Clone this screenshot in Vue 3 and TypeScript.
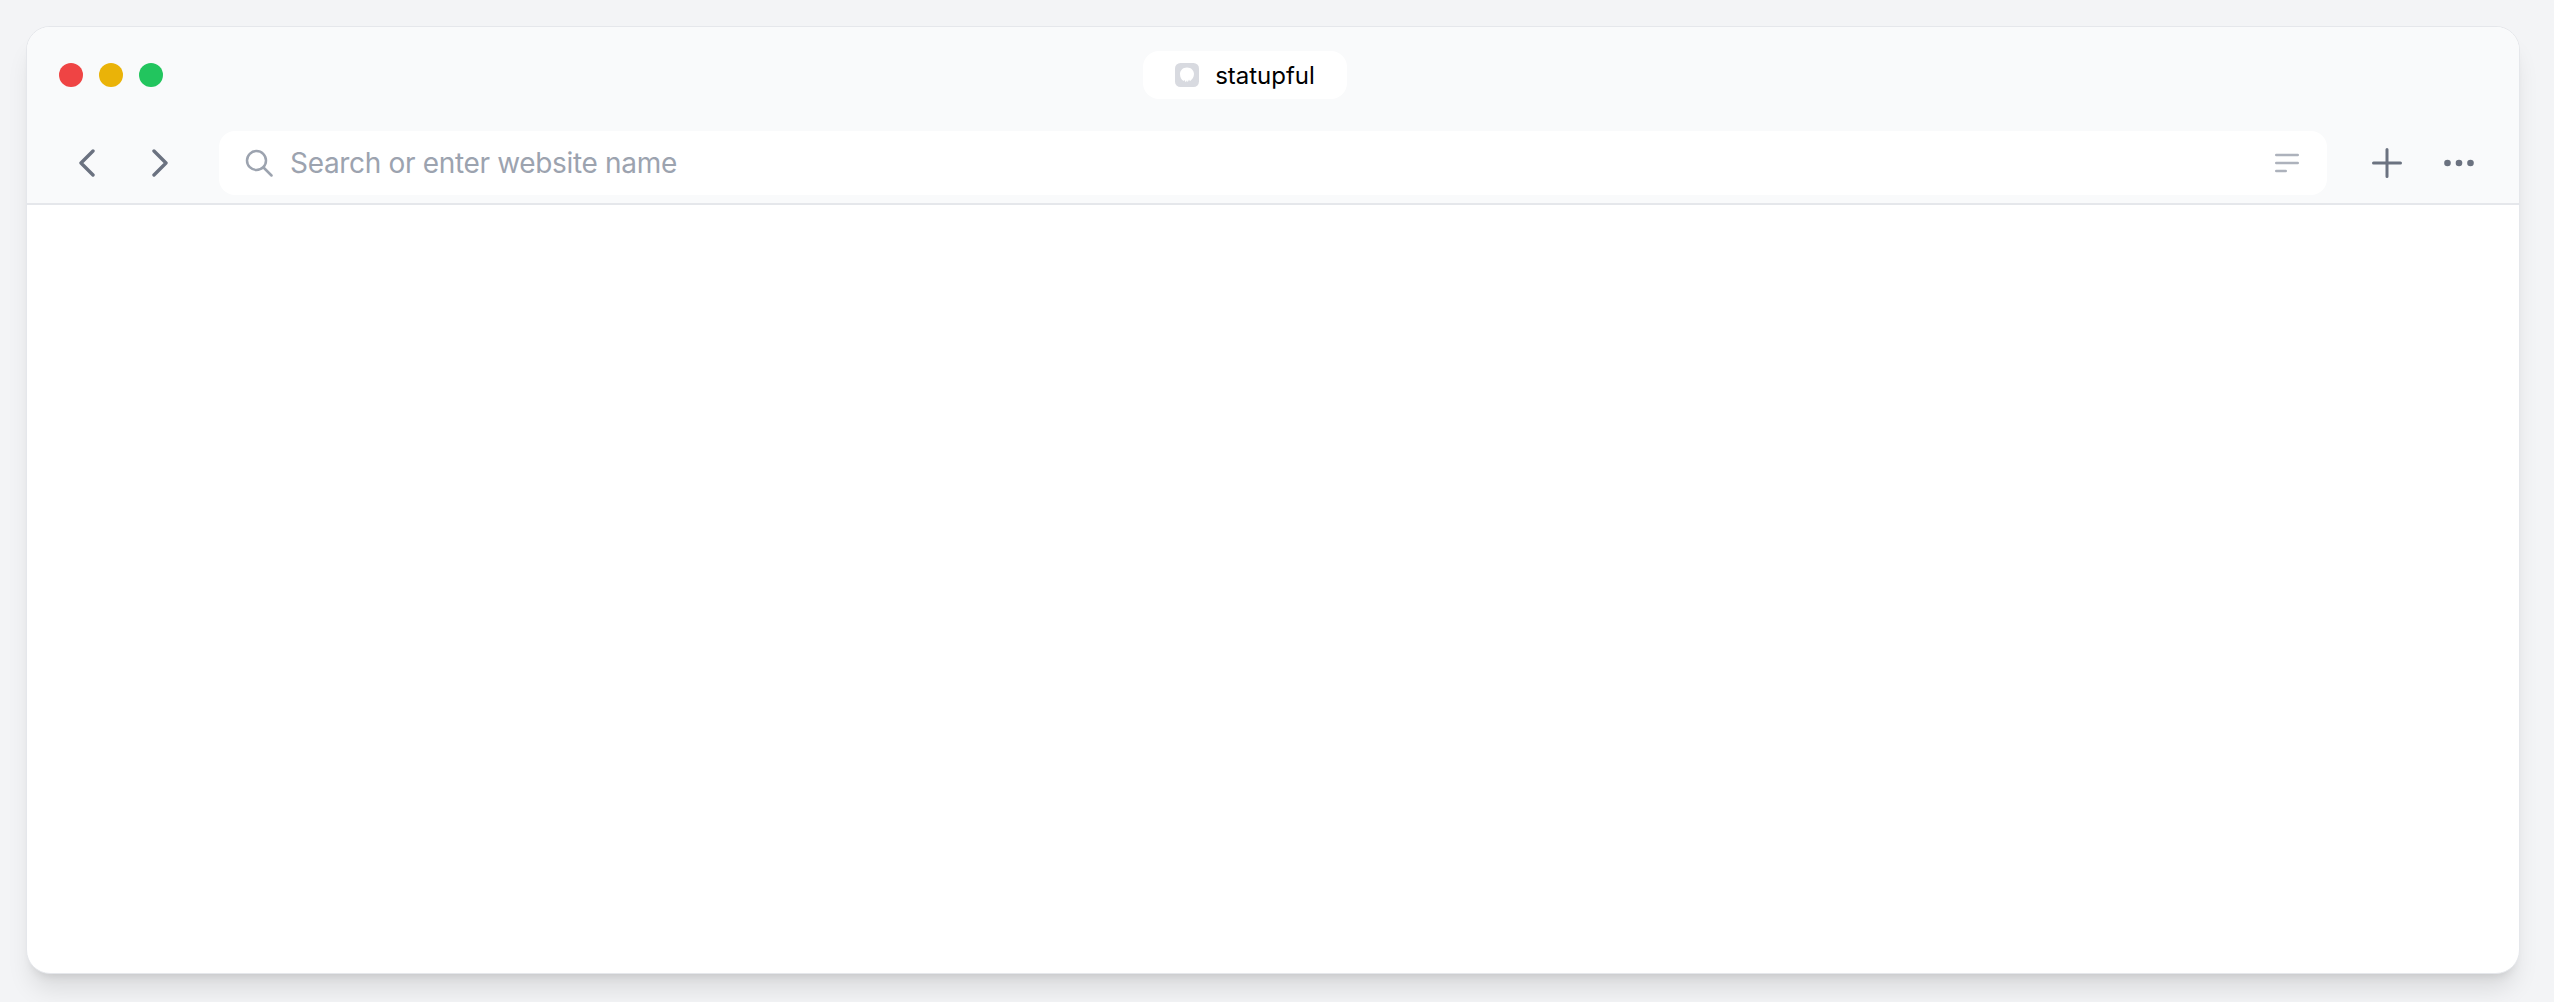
<script setup lang="ts">
const lights: string[] = ['red', 'yellow', 'green']
</script>

<template>
  <div class="page">
    <div class="window">
      <header class="chrome">
        <div class="titlebar">
          <div class="lights">
            <span v-for="l in lights" :key="l" class="light" :class="l"></span>
          </div>
          <div class="tab">
            <svg class="favicon" width="24" height="24" viewBox="0 0 24 24">
              <rect width="24" height="24" rx="5.500" fill="#d8dae0" />
              <path d="M12 4.500c4.200 0 7 2.900 7 6.600 0 3.300-2 5.600-4 7.100l-1-1.600-1.300 2.600L12 17.200l-1.200 2-1.400-2.300-1 1.200C6.300 16.600 5 14.300 5 11.100 5 7.400 7.800 4.500 12 4.500Z" fill="#fff" />
            </svg>
            <span class="tab-title">statupful</span>
          </div>
        </div>
        <div class="toolbar">
          <div class="nav">
            <svg width="16" height="28" viewBox="0 0 16 28" fill="none" stroke="#6b7280" stroke-width="3.400" stroke-linecap="round" stroke-linejoin="round"><path d="M14 2 2 14l12 12" /></svg>
            <svg width="16" height="28" viewBox="0 0 16 28" fill="none" stroke="#6b7280" stroke-width="3.400" stroke-linecap="round" stroke-linejoin="round"><path d="M2 2l12 12L2 26" /></svg>
          </div>
          <div class="search">
            <svg class="search-icon" width="28" height="28" viewBox="0 0 28 28" fill="none" stroke="#9ca3af" stroke-width="2.500" stroke-linecap="round"><circle cx="11.500" cy="11.500" r="9.500" /><path d="m18.500 18.500 8 8" /></svg>
            <span class="placeholder">Search or enter website name</span>
            <svg class="lines" width="24" height="20" viewBox="0 0 24 20" fill="none" stroke="#adb2bc" stroke-width="2.400" stroke-linecap="round"><path d="M1.200 2h21.600M1.200 10h21.600M1.200 18h9.600" /></svg>
          </div>
          <div class="actions">
            <svg width="30" height="30" viewBox="0 0 30 30" fill="none" stroke="#6b7280" stroke-width="3" stroke-linecap="round"><path d="M15 1.500v27M1.500 15h27" /></svg>
            <svg width="30" height="8" viewBox="0 0 30 8" fill="#6b7280"><circle cx="3.500" cy="4" r="3.300" /><circle cx="15" cy="4" r="3.300" /><circle cx="26.500" cy="4" r="3.300" /></svg>
          </div>
        </div>
      </header>
      <main class="content"></main>
    </div>
  </div>
</template>

<style>
html, body { margin: 0; background: #f3f4f6; }
</style>

<style scoped>
.page {
  box-sizing: border-box;
  height: 1002px;
  padding: 26px 34px 28px 26px;
  background: #f3f4f6;
  display: flex;
}
.window {
  flex: 1;
  display: flex;
  flex-direction: column;
  background: #fff;
  border: 1px solid #e5e7eb;
  border-radius: 24px;
  overflow: hidden;
  font-family: Inter, "Liberation Sans", sans-serif;
  box-shadow: 0 20px 25px -5px rgba(0,0,0,.1), 0 8px 10px -6px rgba(0,0,0,.1);
}
.chrome {
  background: #f9fafb;
  border-bottom: 2px solid #e5e7eb;
  padding: 24px 0 8px;
  display: flex;
  flex-direction: column;
  gap: 32px;
}
.titlebar {
  position: relative;
  display: flex;
  justify-content: center;
  padding-right: 56px;
}
.lights {
  position: absolute;
  left: 32px;
  top: 12px;
  display: flex;
  gap: 16px;
}
.light { width: 24px; height: 24px; border-radius: 50%; }
.red { background: #ef4444; }
.yellow { background: #eab308; }
.green { background: #22c55e; }
.tab {
  height: 48px;
  box-sizing: border-box;
  padding: 0 32px;
  display: flex;
  align-items: center;
  gap: 16px;
  background: #fff;
  border-radius: 16px;
}
.tab-title { font-size: 24px; color: #000; }
.toolbar {
  display: flex;
  align-items: center;
  padding: 0 45px 0 52px;
}
.nav { display: flex; gap: 57px; margin-right: 51px; }
.nav svg, .actions svg { display: block; }
.search {
  flex: 1;
  height: 64px;
  box-sizing: border-box;
  padding: 0 28px 0 26px;
  display: flex;
  align-items: center;
  gap: 17px;
  background: #fff;
  border-radius: 16px;
}
.search-icon { flex: none; }
.placeholder { flex: 1; font-size: 28px; letter-spacing: -0.33px; color: #9ca3af; }
.actions {
  display: flex;
  align-items: center;
  gap: 42px;
  margin-left: 45px;
}
.content { flex: 1; }
</style>
